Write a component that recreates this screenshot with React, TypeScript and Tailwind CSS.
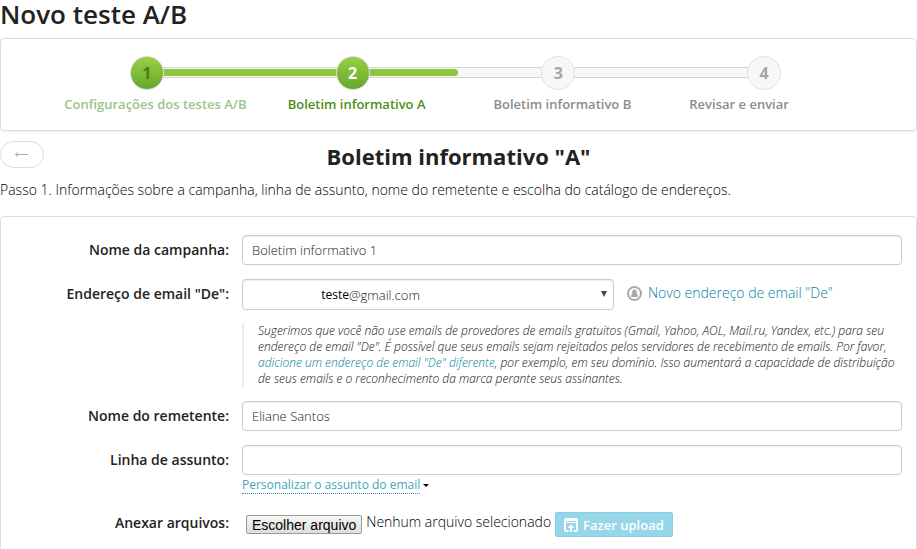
import { useRef } from "react";
import type { ReactNode } from "react";
import clsx from "clsx";

type StepState = "done" | "current" | "pending";

const steps: { label: string; state: StepState }[] = [
  { label: "Configurações dos testes A/B", state: "done" },
  { label: "Boletim informativo A", state: "current" },
  { label: "Boletim informativo B", state: "pending" },
  { label: "Revisar e enviar", state: "pending" },
];

const fieldClass =
  "block h-[30px] w-full rounded border border-[#ccc] bg-white px-[9px] text-[13px] font-light text-[#222] shadow-[inset_0_1px_1px_rgba(0,0,0,0.075)] outline-none focus:border-[#45a9c4]";

function Stepper() {
  return (
    <nav
      aria-label="Etapas"
      className="rounded border border-[#ddd] pt-[17px] pr-[49px] pb-4 pl-[43px] shadow-[0_1px_2px_rgba(0,0,0,0.08)]"
    >
      <div className="relative">
        <div className="absolute top-[11px] right-[12.5%] left-[12.5%] h-[11px] border-y border-[#d4d4d4] bg-[#f7f7f7]">
          <div className="mt-px h-[7px] w-[50.4%] rounded bg-[#8cc63c]" />
        </div>
        <div className="relative grid grid-cols-4 justify-items-center">
          {steps.map((step, i) => (
            <span
              key={step.label}
              className={clsx(
                "flex size-[34px] items-center justify-center rounded-full border text-base font-bold",
                step.state === "pending" && "border-[#e2e2e2] bg-[#f7f7f7] text-[#a5a5a5]",
                step.state !== "pending" &&
                  "border-[#dcdcdc] bg-linear-to-b from-[#9bd044] to-[#62a82c] bg-origin-border",
                step.state === "done" && "text-[#4a7d12]",
                step.state === "current" && "text-white",
              )}
            >
              {i + 1}
            </span>
          ))}
        </div>
      </div>
      <ol className="mt-1 grid grid-cols-[191fr_212fr_200fr_154fr] pr-[51px] pl-4">
        {steps.map((step) => (
          <li
            key={step.label}
            className={clsx(
              "text-center text-[13px] leading-5 font-semibold whitespace-nowrap",
              step.state === "done" && "text-[#9cc388]",
              step.state === "current" && "text-[#4a9016]",
              step.state === "pending" && "text-[#8c8c8c]",
            )}
          >
            {step.label}
          </li>
        ))}
      </ol>
    </nav>
  );
}

function Row({ label, htmlFor, children }: { label: string; htmlFor: string; children: ReactNode }) {
  return (
    <div className="grid grid-cols-[228px_1fr] gap-x-[13px]">
      <label htmlFor={htmlFor} className="pt-[5px] text-right text-sm leading-5 font-semibold text-[#222]">
        {label}
      </label>
      <div className="min-w-0">{children}</div>
    </div>
  );
}

function PersonIcon() {
  return (
    <svg viewBox="0 0 15 15" className="size-[15px] shrink-0" aria-hidden="true">
      <circle cx="7.5" cy="7.5" r="6.5" fill="none" stroke="#aaa" strokeWidth="2" />
      <path
        d="M7.5 3.4C6 3.4 5.2 4.4 5.2 5.7V7.5c0 .6-.4 1.2-1.2 1.6v2h7v-2c-.8-.4-1.2-1-1.2-1.6V5.7c0-1.3-.8-2.3-2.3-2.3z"
        fill="#aaa"
      />
    </svg>
  );
}

function UploadIcon() {
  return (
    <svg viewBox="0 0 14 14" className="size-[14px] shrink-0" fill="none" stroke="#fff" aria-hidden="true">
      <path
        d="M4.500 13H2.500A1.500 1.500 0 0 1 1 11.500V2.500A1.500 1.500 0 0 1 2.500 1h9A1.500 1.500 0 0 1 13 2.500v9a1.500 1.500 0 0 1-1.500 1.500h-2"
        strokeWidth="2"
      />
      <path d="M1 2.500h12M1 4.500h12" strokeWidth="1" />
      <path d="M7 14V9" strokeWidth="2" />
      <path d="M3.500 10 7 6.500l3.500 3.500z" fill="#fff" stroke="none" />
    </svg>
  );
}

export default function App() {
  const fileRef = useRef<HTMLInputElement>(null);

  return (
    <main className="bg-white font-['Open_Sans','Noto_Sans',sans-serif] text-sm leading-5 text-[#222]">
      <h1 className="pb-[10px] text-[26px] leading-7 font-semibold">Novo teste A/B</h1>

      <Stepper />

      <div className="mt-[10px] grid grid-cols-[1fr_auto_1fr] items-start">
        <button
          type="button"
          aria-label="Voltar"
          className="flex h-[27px] w-11 items-center justify-center rounded-full border border-[#ddd] bg-white"
        >
          <svg viewBox="0 0 14 7" className="h-[7px] w-[14px]" fill="none" stroke="#aaa" aria-hidden="true">
            <path d="M0 3.5h13M3 1.5 .5 3.5l2.5 2" />
          </svg>
        </button>
        <h2 className="text-[22px] leading-[30px] font-bold">Boletim informativo "A"</h2>
      </div>

      <p className="mt-[9px] font-light text-black">
        Passo 1. Informações sobre a campanha, linha de assunto, nome do remetente e escolha do catálogo de
        endereços.
      </p>

      <form
        onSubmit={(e) => e.preventDefault()}
        className="mt-4 flex flex-col gap-[14px] rounded border border-[#ddd] pt-[18px] pr-[14px] pb-6"
      >
        <Row label="Nome da campanha:" htmlFor="campaign">
          <input id="campaign" type="text" defaultValue="Boletim informativo 1" className={fieldClass} />
        </Row>

        <Row label={'Endereço de email "De":'} htmlFor="from">
          <div className="flex items-start">
            <div className="relative w-[372px]">
              <select
                id="from"
                className="block h-[31px] w-full appearance-none rounded border border-[#ccc] bg-white pl-[106px] text-[13px] font-light text-[#222] shadow-[inset_0_1px_1px_rgba(0,0,0,0.075)] outline-none"
              >
                <option>@gmail.com</option>
              </select>
              <span className="pointer-events-none absolute inset-y-0 left-0 flex w-[107px] items-center justify-end text-xs text-black">
                teste
              </span>
              <svg
                viewBox="0 0 6 6"
                className="pointer-events-none absolute top-3 right-[7px] size-[6px]"
                aria-hidden="true"
              >
                <path d="M0 0h6L3 6z" fill="#444" />
              </svg>
            </div>
            <a href="#novo" className="mt-1 ml-[13px] flex items-center gap-[6px] font-light text-[#007f9f]">
              <PersonIcon />
              Novo endereço de email "De"
            </a>
          </div>
          <p className="mt-[13px] border-l-2 border-[#eee] pl-[14px] text-xs leading-4 font-light text-[#111] italic">
            Sugerimos que você não use emails de provedores de emails gratuitos (Gmail, Yahoo, AOL, Mail.ru,
            Yandex, etc.) para seu endereço de email "De". É possível que seus emails sejam rejeitados pelos
            servidores de recebimento de emails. Por favor,{" "}
            <a href="#adicionar" className="text-[#007f9f]">
              adicione um endereço de email "De" diferente
            </a>
            , por exemplo, em seu domínio. Isso aumentará a capacidade de distribuição de seus emails e o
            reconhecimento da marca perante seus assinantes.
          </p>
        </Row>

        <Row label="Nome do remetente:" htmlFor="sender">
          <input id="sender" type="text" defaultValue="Eliane Santos" className={fieldClass} />
        </Row>

        <Row label="Linha de assunto:" htmlFor="subject">
          <input id="subject" type="text" className={fieldClass} />
          <div className="mt-[2px] flex items-center gap-[3px]">
            <button
              type="button"
              className="border-b border-dotted border-[#2a98b5] text-xs leading-4 text-[#45a5bd]"
            >
              Personalizar o assunto do email
            </button>
            <svg viewBox="0 0 6 3" className="h-[3px] w-[6px]" aria-hidden="true">
              <path d="M0 0h6L3 3z" fill="#000" />
            </svg>
          </div>
        </Row>

        <Row label="Anexar arquivos:" htmlFor="attachment">
          <div className="flex items-start pt-1 pl-1">
            <input ref={fileRef} id="attachment" type="file" className="hidden" />
            <button
              type="button"
              onClick={() => fileRef.current?.click()}
              className="mt-[3px] h-[19px] rounded-xs border border-[#999] bg-linear-to-b from-[#f6f6f6] to-[#dedede] px-[5px] font-['Liberation_Sans',Arial,sans-serif] text-sm leading-4 text-black"
            >
              Escolher arquivo
            </button>
            <span className="ml-1 font-light whitespace-nowrap text-black">Nenhum arquivo selecionado</span>
            <button
              type="button"
              className="ml-1 flex h-[25px] items-center gap-[5px] rounded-xs border border-[#86d0e4] bg-[#96d6e8] px-2 text-[13px] font-semibold text-white"
            >
              <UploadIcon />
              Fazer upload
            </button>
          </div>
        </Row>
      </form>
    </main>
  );
}
